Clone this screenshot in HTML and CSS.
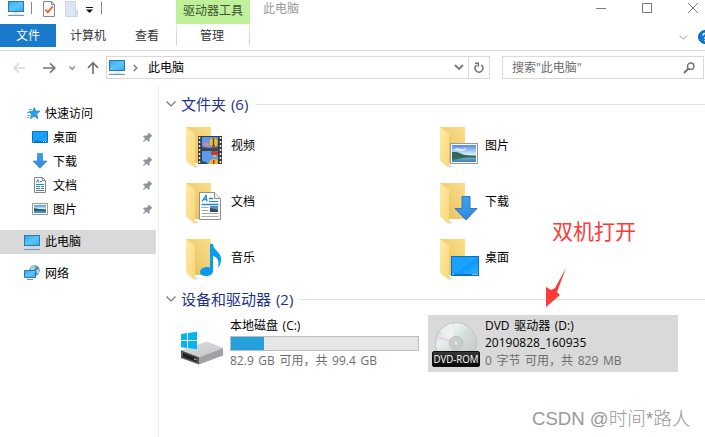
FILE: index.html
```html
<!DOCTYPE html>
<html lang="zh-CN">
<head>
  <meta charset="UTF-8">
  <meta name="viewport" content="width=device-width, initial-scale=1.0">
  <title>此电脑</title>
  <link rel="stylesheet" href="styles.css">
</head>

<body>
  <!-- Shared icons -->
  <svg class="defs" width="0" height="0">
    <defs>
      <linearGradient id="back" x1="0" y1="1" x2="1" y2="0">
        <stop offset="0" stop-color="#e5bd59"/><stop offset="1" stop-color="#fbdf8c"/>
      </linearGradient>
      <linearGradient id="flap" x1="0" y1="0" x2="1" y2="1">
        <stop offset="0" stop-color="#ffeaa8"/><stop offset="1" stop-color="#f9d77a"/>
      </linearGradient>
      <linearGradient id="screen" x1="0" y1="0" x2="1" y2="1">
        <stop offset="0" stop-color="#2aa6f5"/><stop offset=".5" stop-color="#5cc4fb"/><stop offset="1" stop-color="#37abf7"/>
      </linearGradient>
      <linearGradient id="desk" x1="0" y1="0" x2="1" y2="1">
        <stop offset="0" stop-color="#14a0fb"/><stop offset=".5" stop-color="#1ba2fe"/><stop offset=".52" stop-color="#0b99fb"/><stop offset="1" stop-color="#35b0ff"/>
      </linearGradient>
      <linearGradient id="sky" x1="0" y1="0" x2="0" y2="1">
        <stop offset="0" stop-color="#4a8fe4"/><stop offset="1" stop-color="#e0f2fa"/>
      </linearGradient>
      <linearGradient id="sea" x1="0" y1="0" x2="0" y2="1">
        <stop offset="0" stop-color="#8fc0dc"/><stop offset="1" stop-color="#3d7fb4"/>
      </linearGradient>
      <linearGradient id="down" x1="0" y1="0" x2="0" y2="1">
        <stop offset="0" stop-color="#3fa0ee"/><stop offset="1" stop-color="#2c8ae0"/>
      </linearGradient>
      <linearGradient id="driveTop" x1="0" y1="0" x2="1" y2="1">
        <stop offset="0" stop-color="#dedede"/><stop offset="1" stop-color="#c4c4c8"/>
      </linearGradient>
      <linearGradient id="disc" x1="0" y1="0" x2="1" y2="1">
        <stop offset="0" stop-color="#c9cfcf"/><stop offset=".3" stop-color="#e9f0ef"/><stop offset=".55" stop-color="#d2d9d9"/><stop offset="1" stop-color="#bfc6c6"/>
      </linearGradient>
      <linearGradient id="label" x1="0" y1="0" x2="0" y2="1">
        <stop offset="0" stop-color="#3a3a3a"/><stop offset="1" stop-color="#050505"/>
      </linearGradient>
    </defs>

    <symbol id="pc" viewBox="0 0 16 15">
      <rect x=".5" y=".5" width="15" height="10" fill="url(#screen)" stroke="#31789f"/>
      <path d="M5 12h6" stroke="#b8dcf0"/>
      <path d="M0 14.500h16" stroke="#7f93a7"/>
      <path d="M1 13.500h14" stroke="#cbd5de" stroke-width=".6"/>
    </symbol>
    <symbol id="folder" viewBox="0 0 44 42">
      <path d="M8 37l5 2.500-4 1.500z" fill="#ddd"/>
      <path d="M0 0h25v34l-1 2H9z" fill="url(#back)"/>
      <path d="M0 0l9 6.500V39q0 2-1.500 1L0 33.500z" fill="url(#flap)"/>
    </symbol>
    <symbol id="desktop" viewBox="0 0 28 20">
      <rect x=".5" y=".5" width="27" height="19" fill="url(#desk)" stroke="#0871bb"/>
      <path d="M1 18.500h26" stroke="#0875c6"/>
      <path d="M1.500 18.500h1M21.500 18.500h1M23.500 18.500h1M25.500 18.500h1" stroke="#fff"/>
    </symbol>
    <symbol id="download" viewBox="0 0 24 25">
      <path d="M8 .5h8v12h7L12 24 1 12.500h7z" fill="url(#down)" stroke="#2473bd" stroke-width=".9"/>
    </symbol>
    <symbol id="picture" viewBox="0 0 28 21">
      <rect x=".5" y=".5" width="27" height="20" fill="#fff" stroke="#999"/>
      <path d="M2 2h24v10H2z" fill="url(#sky)"/>
      <path d="M2 12h24v7H2z" fill="url(#sea)"/>
      <path d="M3 7l4-2 5 1 4-1v2l-5 1z" fill="#fff" opacity=".65"/>
      <path d="M2 9l5 0 6 2.500 6 1 7 .5v1.500H2z" fill="#2d6b50"/>
      <path d="M2 14h15l-9 2-6 1z" fill="#35695e"/>
    </symbol>
    <symbol id="document" viewBox="0 0 22 28">
      <path d="M.5.500h15l6 6v21H.500z" fill="#fff" stroke="#8d8d8d"/>
      <path d="M15.500.500v6h6" fill="#eee" stroke="#8d8d8d"/>
      <path d="M3 9.500L7 3.500l1 6M4.500 7.500h3.500M10 6.500h4M2.500 12.500h17" fill="none" stroke="#1e88d2" stroke-width="1.300"/>
      <path d="M10 9.500h9" stroke="#1e88d2"/>
      <path d="M2.500 15.500h7M2.500 18.500h7M2.500 21.500h17M2.500 24.500h17" stroke="#a9a9a9"/>
      <path d="M11 14h8v6h-8z" fill="#578eb8"/><path d="M11 16l8 2v2h-8z" fill="#304f55"/>
    </symbol>
    <symbol id="pin" viewBox="0 0 11 11">
      <path d="M6.500.500l4 3.500-1.500.8-1.500 2 .2 2.200-1.200.8-2-2L.500 10.500 3 6.500l-2-2 1-1 2.500.3L6.300 2z" fill="#8b979f"/>
    </symbol>
    <symbol id="chevron" viewBox="0 0 10 6">
      <path d="M.5.500L5 5 9.500.500" fill="none" stroke="currentColor" stroke-width="1.200"/>
    </symbol>
  </svg>

  <header class="title-bar">
    <div class="quick-access">
      <svg width="16" height="15"><use href="#pc"/></svg>
      <span class="separator"></span>
      <svg class="check" width="12" height="16" viewBox="0 0 12 16">
        <path d="M.5.500h8l3 3v12H.500z" fill="#fafafa" stroke="#888"/>
        <path d="M8.500.500v3h3" fill="none" stroke="#888"/>
        <path d="M2.500 8.500l2.300 2.800 5-6" fill="none" stroke="#ec5b20" stroke-width="1.700"/>
      </svg>
      <svg class="blank" width="13" height="16" viewBox="0 0 13 16">
        <path d="M.5.500h10V9h2v6.500H.500z" fill="#dbe5f3" stroke="#c9d5e8"/>
        <path d="M10.500 9v6" stroke="#c9d5e8"/>
      </svg>
      <svg class="more" width="7" height="6" viewBox="0 0 7 6">
        <path d="M0 .5h7" stroke="#111"/><path d="M0 2.500h7L3.500 6z" fill="#111"/>
      </svg>
      <span class="separator"></span>
    </div>
    <div class="tool-title">驱动器工具</div>
    <div class="window-title">此电脑</div>
    <div class="window-buttons">
      <svg width="10" height="10"><path d="M0 5.500h10" stroke="#777"/></svg>
      <svg width="10" height="10"><path d="M.5.500h9v9H.500z" fill="none" stroke="#777"/></svg>
      <svg width="10" height="10"><path d="M0 0l10 10M10 0L0 10" stroke="#777"/></svg>
    </div>
  </header>

  <nav class="ribbon">
    <div class="tab file">文件</div>
    <div class="tab computer">计算机</div>
    <div class="tab view">查看</div>
    <div class="tab manage">管理</div>
    <svg class="expand" width="9" height="5"><use href="#chevron"/></svg>
    <svg class="help" width="14" height="14" viewBox="0 0 14 14">
      <circle cx="7" cy="7" r="6.500" fill="#0f79d4" stroke="#0a5da8"/>
      <path d="M5 5.500q0-2 2-2t2 2q0 1-2 2.200V9M7 10v1.300" fill="none" stroke="#fff" stroke-width="1.300"/>
    </svg>
  </nav>

  <div class="toolbar">
    <svg class="arrows" width="94" height="14" viewBox="0 0 94 14" fill="none" stroke-width="1.700">
      <path d="M13 7H2.500M7 2.300L2.200 7 7 11.700" stroke="#dadada"/>
      <path d="M31 7h11.500M38 2.300L42.800 7 38 11.700" stroke="#777"/>
      <path d="M57.500 5.500l2.700 2.700 2.700-2.700" stroke="#999"/>
      <path d="M81 13V2M76 6.800L81 1.700l5 5.100" stroke="#777"/>
    </svg>
    <div class="address">
      <svg class="address-icon" width="16" height="15"><use href="#pc"/></svg>
      <svg width="5" height="8" viewBox="0 0 5 8"><path d="M.8 1L3.800 4 .8 7" fill="none" stroke="#777" stroke-width="1.400"/></svg>
      <span class="path">此电脑</span>
      <svg class="history" width="10" height="7" viewBox="0 0 10 7"><path d="M1 1l4 4 4-4" fill="none" stroke="#777" stroke-width="1.800"/></svg>
      <div class="refresh">
        <svg width="12" height="12" viewBox="0 0 12 12"><path d="M8.200 2.800a4 4 0 1 1-4.800.3M2 1.300h3.300v3.500" fill="none" stroke="#707070" stroke-width="1.500"/></svg>
      </div>
    </div>
    <div class="search">
      <span>搜索"此电脑"</span>
      <svg width="12" height="12" viewBox="0 0 12 12" fill="none" stroke="#707070"><circle cx="7.700" cy="4.200" r="3.200" stroke-width="1.400"/><path d="M5.400 6.600L1 11" stroke-width="2"/></svg>
    </div>
  </div>

  <div class="content">
    <aside class="sidebar">
      <div class="item">
        <svg width="16" height="16" viewBox="0 0 16 16">
          <path d="M9.200 2.500l1.500 3.500 4.300.2-3.400 2.800 1.400 4.800-4-2.600-3.700 2.600 1.200-4.400L4 6.500l3.800-.3z" fill="#2ba0ec" stroke="#1f7fc4" stroke-width=".7"/>
          <path d="M4 4.500h3M2 7.500h3M2 10.500h3M2 12.500h2" stroke="#51b5f2"/>
        </svg>
        <span>快速访问</span>
      </div>
      <div class="item sub">
        <svg width="16" height="12" viewBox="0 0 16 12">
          <path d="M.5.500h15v11H.500z" fill="url(#desk)" stroke="#0871bb"/><path d="M1 10.500h14" stroke="#0875c6"/><path d="M1 10.500h1M11 10.500h1M13 10.500h1" stroke="#fff"/>
        </svg>
        <span>桌面</span><svg class="pin" width="11" height="11"><use href="#pin"/></svg>
      </div>
      <div class="item sub">
        <svg width="16" height="16"><use href="#download"/></svg>
        <span>下载</span><svg class="pin" width="11" height="11"><use href="#pin"/></svg>
      </div>
      <div class="item sub">
        <svg width="16" height="16" viewBox="0 0 16 16">
          <path d="M2.500.500h8l3 3v12h-11z" fill="#fff" stroke="#888"/><path d="M10.500.500v3h3" fill="none" stroke="#888"/>
          <path d="M4.500 5.500l1.500-3 1 3M8 4.500h2M4 7.500h8M4 9.500h4M9 9.500h3M4 11.500h4" fill="none" stroke="#1e88d2"/><path d="M4 13.500h8M9 11.500h3" stroke="#777"/>
        </svg>
        <span>文档</span><svg class="pin" width="11" height="11"><use href="#pin"/></svg>
      </div>
      <div class="item sub">
        <svg width="16" height="12" viewBox="0 0 16 12">
          <path d="M.5.500h15v11H.500z" fill="#fff" stroke="#999"/><path d="M2 2h12v4H2z" fill="url(#sky)"/><path d="M2 6h12v4H2z" fill="#4c8fc0"/><path d="M2 5l5 1 7 1v1H2z" fill="#2d5f58"/>
        </svg>
        <span>图片</span><svg class="pin" width="11" height="11"><use href="#pin"/></svg>
      </div>
      <div class="item selected">
        <svg width="16" height="15"><use href="#pc"/></svg>
        <span>此电脑</span>
      </div>
      <div class="item network">
        <svg width="16" height="16" viewBox="0 0 16 16">
          <circle cx="10.500" cy="5.500" r="5.200" fill="#4b87aa"/><path d="M7 2q3-2 5 0l-2 3-4 1zM12 5l3-1v4l-2 1z" fill="#a9d3df"/>
          <path d="M.5 5.500h11v7H.500z" fill="url(#screen)" stroke="#2779ae"/><path d="M3 14.500h6" stroke="#7193ad"/>
        </svg>
        <span>网络</span>
      </div>
    </aside>

    <main class="files">
      <h2><svg width="10" height="6"><use href="#chevron"/></svg><span>文件夹 (6)</span></h2>
      <div class="folders">
        <div class="folder">
          <svg width="44" height="42">
            <use href="#folder" width="44" height="42"/>
            <path d="M12 9h24v28H12z" fill="#3c3c3c"/>
            <path d="M13.500 10v27M34.500 10v27" stroke="#eee" stroke-width="1.500" stroke-dasharray="2 2"/>
            <path d="M16 10h16v13H16z" fill="#5b97ee"/><path d="M16 24h16v13H16z" fill="#5b9af0"/>
            <path d="M16 20l7 1 9-1v3H16z" fill="#344f58"/>
            <path d="M17 17l4-2 3 3-4 2z" fill="#d98a92"/>
            <ellipse cx="27.500" cy="15.500" rx="4" ry="4.500" fill="#f3bf1e"/><path d="M26 18h3v3h-3z" fill="#c83c27"/><path d="M27.500 11v8" stroke="#513a34" stroke-width="1.300"/>
            <ellipse cx="28.500" cy="26" rx="3.500" ry="2.500" fill="#be3a42"/><path d="M26.500 28h4l-2 3z" fill="#eabc25"/>
            <path d="M23 37q0-5 5-5t4 2v3z" fill="#f0b622"/><path d="M27 33h1.500v4H27z" fill="#b92f38"/>
            <path d="M16 34l4 1 2 2h-6z" fill="#244f6a"/>
          </svg>
          <span>视频</span>
        </div>
        <div class="folder">
          <svg width="44" height="42"><use href="#folder" width="44" height="42"/><use href="#picture" x="10" y="16" width="28" height="21"/></svg>
          <span>图片</span>
        </div>
        <div class="folder">
          <svg width="44" height="42"><use href="#folder" width="44" height="42"/><use href="#document" x="13" y="9" width="22" height="28"/></svg>
          <span>文档</span>
        </div>
        <div class="folder">
          <svg width="44" height="42"><use href="#folder" width="44" height="42"/><use href="#download" x="14" y="13" width="24" height="25"/></svg>
          <span>下载</span>
        </div>
        <div class="folder">
          <svg width="44" height="42">
            <use href="#folder" width="44" height="42"/>
            <path d="M24 5h3c0 6 8 8 8 15 0 4-1 7-3 9 1-6 1-10-5-12v15c0 3-3 5-7 5s-6-1.500-6-4 3-5 7-5q2 0 3 .7z" fill="#089bf4"/>
          </svg>
          <span>音乐</span>
        </div>
        <div class="folder">
          <svg width="44" height="42"><use href="#folder" width="44" height="42"/><use href="#desktop" x="11" y="17" width="28" height="20"/></svg>
          <span>桌面</span>
        </div>
      </div>

      <h2><svg width="10" height="6"><use href="#chevron"/></svg><span>设备和驱动器 (2)</span></h2>
      <div class="drives">
        <div class="drive">
          <svg width="48" height="48" viewBox="0 0 48 48">
            <path d="M3 30l18 7v7.500L3 38z" fill="#555"/>
            <path d="M21 37l24-9v7.500l-24 9z" fill="#a2a2a5"/>
            <path d="M3 30l26-8.500L45 28l-24 9z" fill="url(#driveTop)"/>
            <path d="M5 33l14 5v4L5 37z" fill="#202020"/><path d="M16 39l2.500.8" stroke="#40d447" stroke-width="1.500"/>
            <path d="M3 14l6-.9V20H3zM10 13l9-1.200V20h-9zM3 21h6v7l-6-.8zM10 21h9v8.300l-9-1.200z" fill="#04b5ed"/>
          </svg>
          <div class="info">
            <span>本地磁盘 (C:)</span>
            <div class="bar"><div class="used" style="width: 17.500%"></div></div>
            <span class="space">82.9 GB 可用，共 99.4 GB</span>
          </div>
        </div>
        <div class="drive active">
          <svg width="48" height="48" viewBox="0 0 48 48">
            <circle cx="24" cy="23" r="20.500" fill="url(#disc)" stroke="#bfc5c5"/>
            <path d="M24 23L8 11q5-6 12-8z" fill="#f3f8f7" opacity=".55"/>
            <path d="M24 23L5 17" stroke="#e8c9e8" stroke-width="1.500"/><path d="M24 23l13-14" stroke="#bfe9cf" stroke-width="2"/>
            <circle cx="24" cy="23" r="6.500" fill="#cbd0d0" stroke="#b5baba"/><circle cx="24" cy="23" r="3" fill="#dedede" stroke="#b8bcbc"/>
            <rect x=".5" y="31.500" width="47" height="15" rx="1.500" fill="url(#label)" stroke="#111"/>
            <text class="disc-label" x="1.500" y="42.500" textLength="45" lengthAdjust="spacingAndGlyphs">DVD-ROM</text>
          </svg>
          <div class="info">
            <span>DVD 驱动器 (D:)</span>
            <span>20190828_160935</span>
            <span class="space">0 字节 可用，共 829 MB</span>
          </div>
        </div>
      </div>
    </main>
  </div>

  <div class="note">双机打开</div>
  <svg class="note-arrow" width="21" height="41" viewBox="0 0 21 41"><path d="M20 1L9 21 5 23 0 20v20l14-12-3-3z" fill="#fc3b38"/></svg>
  <div class="watermark">CSDN @时间*路人</div>
</body>
</html>
```
FILE: styles.css
```css
* {
  box-sizing: border-box;
  margin: 0;
  padding: 0;
}

body {
  width: 705px;
  height: 437px;
  overflow: hidden;
  position: relative;
  background: #fff;
  color: #000;
  font: 12px/17px "Open Sans", "Noto Sans CJK SC", sans-serif;
  white-space: nowrap;
}

svg {
  display: block;
  flex: none;
  overflow: visible;
}

.defs {
  position: absolute;
}

/* Title bar */
.title-bar {
  display: flex;
  height: 24px;
}

.quick-access {
  display: flex;
  width: 176px;
  padding: 1px 0 0 8px;
}

.separator {
  width: 1px;
  height: 12px;
  margin: 1px 0 0 7px;
  background: #888;
}

.check {
  margin-left: 11px;
}

.blank {
  margin-left: 10px;
}

.more {
  margin: 6px 0 0 8px;
}

.more + .separator {
  margin-left: 8px;
}

.tool-title {
  width: 74px;
  background: #bff19b;
  color: #3c5130;
  line-height: 21px;
  text-align: center;
}

.window-title {
  margin-left: 13px;
  color: #999;
  line-height: 17px;
}

.window-buttons {
  display: flex;
  gap: 36px;
  margin-left: auto;
  padding: 3px 7px 0 0;
}

/* Ribbon tabs */
.ribbon {
  display: flex;
  height: 27px;
  border-bottom: 1px solid #d9d9d9;
  color: #333;
}

.tab {
  flex: none;
  height: 23px;
  line-height: 24px;
  text-align: center;
}

.file {
  width: 56px;
  background: #1979ca;
  color: #fff;
}

.computer {
  width: 64px;
}

.view {
  width: 54px;
}

.manage {
  width: 74px;
  margin-left: 2px;
  padding-right: 2px;
  border: solid;
  border-width: 0 1px;
  border-image: linear-gradient(#eee, #ccc 80%, #fff) 1;
}

.expand {
  margin: 11px 0 0 429px;
  color: #999;
}

.help {
  margin: 6px 0 0 10px;
}

/* Navigation and address */
.toolbar {
  display: flex;
  height: 35px;
  padding: 5px 1px 0 12px;
}

.arrows {
  margin-top: 5px;
}

.address {
  display: flex;
  align-items: center;
  width: 384px;
  height: 23px;
  border: 1px solid #d9d9d9;
}

.address-icon {
  margin: -1px 8px 0 2px;
}

.path {
  margin-left: 10px;
  line-height: 21px;
}

.history {
  margin-left: auto;
}

.refresh {
  display: grid;
  place-items: center;
  width: 21px;
  height: 21px;
  margin-left: 4px;
  border-left: 1px solid #d9d9d9;
}

.search {
  display: flex;
  align-items: center;
  justify-content: space-between;
  width: 202px;
  height: 23px;
  margin-left: 12px;
  padding: 0 8px 0 9px;
  border: 1px solid #d9d9d9;
  color: #6d6d6d;
}

/* Page content */
.content {
  display: flex;
  height: 351px;
}

.sidebar {
  width: 159px;
  padding-top: 16px;
  border-right: 1px solid #eee;
}

.item {
  display: flex;
  align-items: center;
  gap: 5px;
  width: 156px;
  height: 24px;
  padding: 0 3px 2px 24px;
}

.item:first-child {
  gap: 4px;
  padding-left: 25px;
}

.sub {
  padding-left: 32px;
}

.pin {
  margin-left: auto;
}

.selected {
  margin-top: 8px;
  padding-bottom: 0;
  background: #d9d9d9;
}

.selected span {
  margin-top: -1px;
}

.network {
  margin-top: 8px;
}

.files {
  flex: 1;
  padding: 7px 0 0 7px;
}

h2 {
  display: flex;
  align-items: center;
  height: 22px;
  color: #1e3287;
  font-size: 15px;
  font-weight: normal;
  line-height: 22px;
  word-spacing: 1px;
}

h2 svg {
  margin-right: 5px;
  color: #777;
}

h2::after {
  content: "";
  flex: 1;
  height: 1px;
  margin: 1px 0 0 8px;
  background: #e2e2e2;
}

.folders {
  display: grid;
  grid-template-columns: 254px 254px;
  grid-auto-rows: 56px;
  height: 173px;
  padding: 12px 0 0 20px;
}

.folder {
  display: flex;
  gap: 1px;
}

.folder span {
  margin-top: 10px;
}

.drives {
  display: flex;
  gap: 4px;
  padding: 5px 0 0 8px;
}

.drive {
  display: flex;
  gap: 5px;
  width: 250px;
  height: 57px;
  padding: 4px;
  word-spacing: 1.5px;
}

.drive > svg {
  margin-top: 1px;
}

.drive:first-child {
  gap: 4px;
}

.active {
  background: #d9d9d9;
}

.info {
  display: flex;
  flex-direction: column;
  height: 51px;
  margin-top: -2px;
}

.bar {
  width: 189px;
  height: 15px;
  margin: 2px 0 0;
  border: 1px solid #bcbcbc;
  background: #e6e6e6;
}

.used {
  height: 13px;
  background: #26a0da;
}

.space {
  padding-top: 1px;
  color: #6d6d6d;
}

.disc-label {
  fill: #fff;
  font-size: 11px;
}

/* Notes over the window */
.note {
  position: absolute;
  top: 216px;
  left: 552px;
  color: #fc3b38;
  font-size: 21px;
  line-height: 30px;
}

.note-arrow {
  position: absolute;
  top: 267px;
  left: 546px;
}

.watermark {
  position: absolute;
  top: 404px;
  left: 532px;
  color: #999;
  font: 300 18.600px/30px "Liberation Sans", "Noto Sans CJK SC", sans-serif;
}
```
